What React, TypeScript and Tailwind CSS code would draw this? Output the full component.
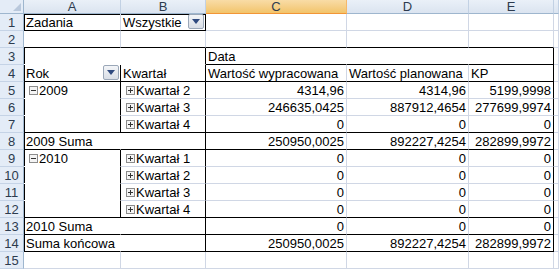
import React from "react";

type B = "g" | "k" | "w";

const rCls: Record<B, string> = {
  g: "border-r border-r-[#d0d7e5]",
  k: "border-r border-r-black",
  w: "border-r border-r-white",
};
const bCls: Record<B, string> = {
  g: "border-b border-b-[#d0d7e5]",
  k: "border-b border-b-black",
  w: "border-b border-b-white",
};

function shadow(l?: boolean, t?: boolean) {
  if (l && t) return "shadow-[inset_1px_1px_0_#000]";
  if (l) return "shadow-[inset_1px_0_0_#000]";
  if (t) return "shadow-[inset_0_1px_0_#000]";
  return "";
}

function Cell({
  r = "g",
  b = "g",
  l,
  t,
  right,
  children,
}: {
  r?: B;
  b?: B;
  l?: boolean;
  t?: boolean;
  right?: boolean;
  children?: React.ReactNode;
}) {
  return (
    <div
      className={`${rCls[r]} ${bCls[b]} ${shadow(l, t)} bg-white flex items-end overflow-visible whitespace-nowrap leading-[15px] ${
        right ? "justify-end pr-[2px]" : "pl-[2px]"
      }`}
    >
      {children}
    </div>
  );
}

function Drop() {
  return (
    <div className="ml-auto mb-[1px] mr-[1px] w-[16px] h-[15px] rounded-[2px] border border-[#9aa7b8] bg-gradient-to-b from-[#f3f5f8] to-[#d9dee6] flex items-center justify-center">
      <svg width="8" height="5" viewBox="0 0 8 5">
        <path d="M0 0 H8 L4 5 Z" fill="#2f4a7f" />
      </svg>
    </div>
  );
}

function Box({ plus }: { plus?: boolean }) {
  return (
    <svg width="9" height="9" viewBox="0 0 9 9" className="mr-[1px] mb-[3px] ml-[3px] shrink-0">
      <rect x="0.5" y="0.5" width="8" height="8" fill="#f4f4f4" stroke="#8c8c8c" />
      <path d="M2 4.5 H7" stroke="#333" strokeWidth="1" />
      {plus && <path d="M4.5 2 V7" stroke="#333" strokeWidth="1" />}
    </svg>
  );
}

function ColH({ label, sel }: { label: string; sel?: boolean }) {
  return (
    <div
      className={`flex items-center justify-center leading-[13px] border-b ${
        sel
          ? "bg-gradient-to-b from-[#f9dca6] to-[#f2c46a] border-b-[#f29536] border-r border-r-[#f5b86a] text-[#2d3b4e]"
          : "bg-gradient-to-b from-[#eaf0f8] to-[#dbe4f0] border-b-[#9eb6ce] border-r border-r-[#c2d1e4] text-[#2d3b4e]"
      }`}
    >
      {label}
    </div>
  );
}

function RowH({ n }: { n: number }) {
  return (
    <div className="bg-[#e4ecf7] border-r border-r-[#9eb6ce] border-b border-b-[#c5d3e6] flex items-end justify-center leading-[15px] text-[#2d3b4e]">
      {n}
    </div>
  );
}

export default function App() {
  const rows: React.ReactNode[] = [];

  // Row 1
  rows.push(
    <React.Fragment key="r1">
      <RowH n={1} />
      <Cell l t r="g" b="k">Zadania</Cell>
      <Cell t r="k" b="k">
        Wszystkie
        <Drop />
      </Cell>
      <Cell />
      <Cell />
      <Cell />
      <Cell />
    </React.Fragment>
  );
  // Row 2
  rows.push(
    <React.Fragment key="r2">
      <RowH n={2} />
      <Cell b="k" />
      <Cell b="k" />
      <Cell b="k" />
      <Cell b="k" />
      <Cell b="k" />
      <Cell />
    </React.Fragment>
  );
  // Row 3
  rows.push(
    <React.Fragment key="r3">
      <RowH n={3} />
      <Cell l r="w" b="w" />
      <Cell r="k" b="w" />
      <Cell r="w" b="k">Data</Cell>
      <Cell r="w" b="k" />
      <Cell r="k" b="k" />
      <Cell />
    </React.Fragment>
  );
  // Row 4
  rows.push(
    <React.Fragment key="r4">
      <RowH n={4} />
      <Cell l r="k" b="k">
        Rok
        <Drop />
      </Cell>
      <Cell r="k" b="k">Kwartał</Cell>
      <Cell r="g" b="k">Wartość wypracowana</Cell>
      <Cell r="g" b="k">Wartość planowana</Cell>
      <Cell r="k" b="k">KP</Cell>
      <Cell />
    </React.Fragment>
  );

  const block = (
    startRow: number,
    year: string,
    items: [string, string, string, string][],
    sum: [string, string, string]
  ) => {
    items.forEach((it, i) => {
      const last = i === items.length - 1;
      const bb: B = last ? "k" : "g";
      rows.push(
        <React.Fragment key={`r${startRow + i}`}>
          <RowH n={startRow + i} />
          <Cell l r="k" b={last ? "k" : "w"}>
            {i === 0 && (
              <>
                <Box />
                {year}
              </>
            )}
          </Cell>
          <Cell r="k" b={bb}>
            <Box plus />
            {it[0]}
          </Cell>
          <Cell right r="g" b={bb}>{it[1]}</Cell>
          <Cell right r="g" b={bb}>{it[2]}</Cell>
          <Cell right r="k" b={bb}>{it[3]}</Cell>
          <Cell />
        </React.Fragment>
      );
    });
    const sr = startRow + items.length;
    rows.push(
      <React.Fragment key={`r${sr}`}>
        <RowH n={sr} />
        <Cell l r="w" b="k">{year} Suma</Cell>
        <Cell r="k" b="k" />
        <Cell right r="g" b="k">{sum[0]}</Cell>
        <Cell right r="g" b="k">{sum[1]}</Cell>
        <Cell right r="k" b="k">{sum[2]}</Cell>
        <Cell />
      </React.Fragment>
    );
  };

  block(
    5,
    "2009",
    [
      ["Kwartał 2", "4314,96", "4314,96", "5199,9998"],
      ["Kwartał 3", "246635,0425", "887912,4654", "277699,9974"],
      ["Kwartał 4", "0", "0", "0"],
    ],
    ["250950,0025", "892227,4254", "282899,9972"]
  );
  block(
    9,
    "2010",
    [
      ["Kwartał 1", "0", "0", "0"],
      ["Kwartał 2", "0", "0", "0"],
      ["Kwartał 3", "0", "0", "0"],
      ["Kwartał 4", "0", "0", "0"],
    ],
    ["0", "0", "0"]
  );

  rows.push(
    <React.Fragment key="r14">
      <RowH n={14} />
      <Cell l r="w" b="k">Suma końcowa</Cell>
      <Cell r="k" b="k" />
      <Cell right r="g" b="k">250950,0025</Cell>
      <Cell right r="g" b="k">892227,4254</Cell>
      <Cell right r="k" b="k">282899,9972</Cell>
      <Cell />
    </React.Fragment>
  );
  rows.push(
    <React.Fragment key="r15">
      <RowH n={15} />
      <Cell />
      <Cell />
      <Cell />
      <Cell />
      <Cell />
      <Cell />
    </React.Fragment>
  );

  return (
    <div
      className="w-[559px] h-[270px] overflow-hidden bg-white text-[13px] text-black"
      style={{ fontFamily: '"Liberation Sans", Arial, sans-serif' }}
    >
      <div className="grid grid-cols-[24px_97px_85px_141px_122px_85px_1fr] grid-rows-[14px_repeat(15,17px)]">
        <div className="bg-[#e4ecf7] border-r border-r-[#9eb6ce] border-b border-b-[#9eb6ce] flex items-end justify-end pr-[2px] pb-[2px]">
          <svg width="8" height="8" viewBox="0 0 8 8">
            <path d="M8 0 V8 H0 Z" fill="#b9c8dc" />
          </svg>
        </div>
        <ColH label="A" />
        <ColH label="B" />
        <ColH label="C" sel />
        <ColH label="D" />
        <ColH label="E" />
        <ColH label="" />
        {rows}
      </div>
    </div>
  );
}
